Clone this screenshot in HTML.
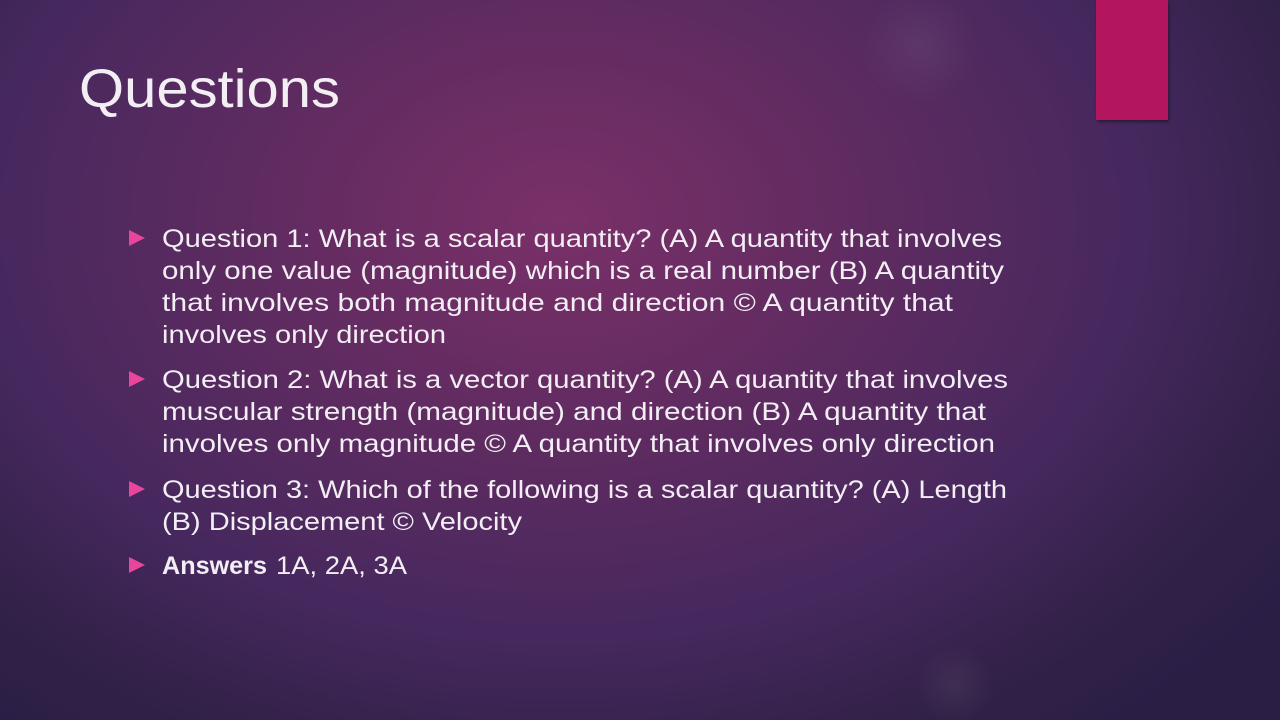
<!DOCTYPE html>
<html><head><style>
html,body{margin:0;padding:0;width:1280px;height:720px;overflow:hidden}
body{background:radial-gradient(ellipse 900px 650px at 560px 220px,#7a3068 0%,#5e2b60 35%,#45285e 65%,#322148 85%,#2a1e45 100%)}
svg{position:absolute;left:0;top:0}
</style></head><body>
<svg width="1280" height="720" xmlns="http://www.w3.org/2000/svg">
<defs><radialGradient id="g" cx="0.5" cy="0.5" r="0.5"><stop offset="0" stop-color="#ffffff" stop-opacity="0.06"/><stop offset="1" stop-color="#ffffff" stop-opacity="0"/></radialGradient>
<filter id="s"><feDropShadow dx="1" dy="2" stdDeviation="1.5" flood-opacity="0.4"/></filter></defs>
<circle cx="920" cy="45" r="60" fill="url(#g)"/>
<circle cx="955" cy="685" r="40" fill="url(#g)"/>
<rect x="1096" y="0" width="72" height="120" fill="#b3145f" filter="url(#s)"/>
<g font-family="Liberation Sans, sans-serif" fill="#f2eef4">
<text x="79" y="107" font-size="54" textLength="261" lengthAdjust="spacingAndGlyphs">Questions</text>
<g font-size="25">
<text x="162" y="247" textLength="840" lengthAdjust="spacingAndGlyphs">Question 1: What is a scalar quantity? (A) A quantity that involves</text>
<text x="162" y="279" textLength="842" lengthAdjust="spacingAndGlyphs">only one value (magnitude) which is a real number (B) A quantity</text>
<text x="162" y="311" textLength="791" lengthAdjust="spacingAndGlyphs">that involves both magnitude and direction © A quantity that</text>
<text x="162" y="343" textLength="284" lengthAdjust="spacingAndGlyphs">involves only direction</text>
<text x="162" y="388" textLength="846" lengthAdjust="spacingAndGlyphs">Question 2: What is a vector quantity? (A) A quantity that involves</text>
<text x="162" y="420" textLength="824" lengthAdjust="spacingAndGlyphs">muscular strength (magnitude) and direction (B) A quantity that</text>
<text x="162" y="452" textLength="833" lengthAdjust="spacingAndGlyphs">involves only magnitude © A quantity that involves only direction</text>
<text x="162" y="498" textLength="845" lengthAdjust="spacingAndGlyphs">Question 3: Which of the following is a scalar quantity? (A) Length</text>
<text x="162" y="530" textLength="360" lengthAdjust="spacingAndGlyphs">(B) Displacement © Velocity</text>
<text x="162" y="574" font-weight="bold" textLength="105" lengthAdjust="spacingAndGlyphs">Answers</text>
<text x="276" y="574" textLength="131" lengthAdjust="spacingAndGlyphs">1A, 2A, 3A</text>
</g></g>
<g fill="#e8459c">
<polygon points="129,230 145,238 129,246"/>
<polygon points="129,371 145,379 129,387"/>
<polygon points="129,481 145,489 129,497"/>
<polygon points="129,557 145,565 129,573"/>
</g>
</svg>
</body></html>
